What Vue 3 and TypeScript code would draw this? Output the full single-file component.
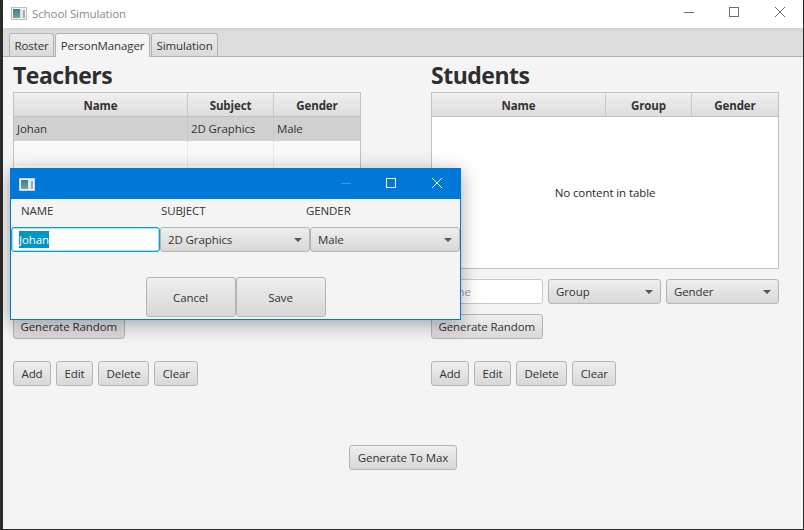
<script setup lang="ts">
interface Panel {
  title: string
  columns: string[]
  placeholder: string
  combo: string
  covered: boolean
  rows: string[][]
}

const tabs: string[] = ['Roster', 'PersonManager', 'Simulation']
const actions: string[] = ['Add', 'Edit', 'Delete', 'Clear']
const panels: Panel[] = [
  {
    title: 'Teachers',
    columns: ['Name', 'Subject', 'Gender'],
    placeholder: 'Name',
    combo: 'Subject',
    covered: true,
    rows: [['Johan', '2D Graphics', 'Male'], ['', '', ''], ['', '', ''], ['', '', ''], ['', '', ''], ['', '', '']]
  },
  {
    title: 'Students',
    columns: ['Name', 'Group', 'Gender'],
    placeholder: 'Name',
    combo: 'Group',
    covered: false,
    rows: []
  }
]
</script>

<template>
  <div class="frame">
    <div class="app">
      <header class="titlebar">
        <svg class="appicon" width="16" height="13" viewBox="0 0 16 13">
          <defs>
            <linearGradient id="iconA" x1="0" y1="0" x2="0" y2="1">
              <stop offset="0" stop-color="#44769a" />
              <stop offset="1" stop-color="#70ab8c" />
            </linearGradient>
          </defs>
          <rect x="0.5" y="0.5" width="15" height="12" fill="#f4f4f4" stroke="#bdbdbd" />
          <rect x="2" y="2" width="7" height="9" fill="url(#iconA)" />
          <rect x="9" y="2" width="3" height="9" fill="#dbe6ea" />
          <rect x="12" y="3" width="2" height="8" fill="#9fadb2" />
        </svg>
        <span class="apptitle">School Simulation</span>
        <div class="winctl">
          <svg width="46" height="28" viewBox="0 0 46 28"><path d="M19 12.5h10" stroke="#6f6f6f" fill="none" /></svg>
          <svg width="46" height="28" viewBox="0 0 46 28"><rect x="18.5" y="7.5" width="9" height="9" stroke="#6f6f6f" fill="none" /></svg>
          <svg width="46" height="28" viewBox="0 0 46 28"><path d="M18 7l10 10M28 7L18 17" stroke="#6f6f6f" fill="none" /></svg>
        </div>
      </header>

      <nav class="tabbar">
        <div v-for="t in tabs" :key="t" class="tab" :class="{ active: t === 'PersonManager' }">{{ t }}</div>
      </nav>

      <main class="content">
        <div class="panels">
          <section v-for="p in panels" :key="p.title" class="panel">
            <h1>{{ p.title }}</h1>
            <div class="table">
              <div class="thead">
                <div v-for="c in p.columns" :key="c" class="th">{{ c }}</div>
              </div>
              <div class="tbody">
                <div v-for="(r, i) in p.rows" :key="i" class="tr" :class="{ selected: i === 0 }">
                  <div v-for="(v, j) in r" :key="j" class="td">{{ v }}</div>
                </div>
                <div v-if="!p.rows.length" class="empty">No content in table</div>
              </div>
            </div>
            <div class="formrow" :class="{ covered: p.covered }">
              <input class="field" :placeholder="p.placeholder" />
              <div class="combo"><span>{{ p.combo }}</span><i class="arrow"></i></div>
              <div class="combo"><span>Gender</span><i class="arrow"></i></div>
            </div>
            <button class="btn random">Generate Random</button>
            <div class="actions">
              <button v-for="a in actions" :key="a" class="btn">{{ a }}</button>
            </div>
          </section>
        </div>
        <div class="footer"><button class="btn">Generate To Max</button></div>
      </main>

      <div class="dialog">
        <div class="dlgtitle">
          <svg class="appicon" width="16" height="13" viewBox="0 0 16 13">
            <defs>
              <linearGradient id="iconB" x1="0" y1="0" x2="0" y2="1">
                <stop offset="0" stop-color="#44769a" />
                <stop offset="1" stop-color="#70ab8c" />
              </linearGradient>
            </defs>
            <rect x="0.5" y="0.5" width="15" height="12" fill="#eef1f2" stroke="#c4d6e4" />
            <rect x="2" y="2" width="7" height="9" fill="url(#iconB)" />
            <rect x="9" y="2" width="3" height="9" fill="#dbe6ea" />
            <rect x="12" y="3" width="2" height="8" fill="#9fadb2" />
          </svg>
          <div class="dlgctl">
            <svg width="46" height="30" viewBox="0 0 46 30"><path d="M19 14.5h10" stroke="#3f97e4" fill="none" /></svg>
            <svg width="46" height="30" viewBox="0 0 46 30"><rect x="18.5" y="9.5" width="9" height="9" stroke="#fff" fill="none" /></svg>
            <svg width="46" height="30" viewBox="0 0 46 30"><path d="M18 9l10 10M28 9L18 19" stroke="#fff" fill="none" /></svg>
          </div>
        </div>
        <div class="dlgbody">
          <div class="labels">
            <span class="lname">NAME</span>
            <span class="lsubject">SUBJECT</span>
            <span>GENDER</span>
          </div>
          <div class="dlgrow">
            <div class="focusfield"><span class="selection">Johan</span></div>
            <div class="combo"><span>2D Graphics</span><i class="arrow"></i></div>
            <div class="combo"><span>Male</span><i class="arrow"></i></div>
          </div>
          <div class="dlgbuttons">
            <button class="btn big">Cancel</button>
            <button class="btn big">Save</button>
          </div>
        </div>
      </div>
    </div>
  </div>
</template>

<style scoped>
.frame {
  width: 804px;
  height: 530px;
  box-sizing: border-box;
  padding: 0 1px 1px 3px;
  background: #2b2b2b;
  font-family: "Open Sans", "Noto Sans", sans-serif;
  font-size: 11.5px;
  letter-spacing: -0.1px;
  color: #333;
  overflow: hidden;
}
.app {
  position: relative;
  height: 100%;
  display: flex;
  flex-direction: column;
  background: #f4f4f4;
}
.titlebar {
  height: 28px;
  flex: none;
  box-sizing: border-box;
  display: flex;
  align-items: center;
  background: #fff;
  padding: 0 0 2px 8px;
}
.appicon { flex: none; }
.apptitle {
  margin-left: 5px;
  color: #8a8a8a;
}
.winctl {
  margin-left: auto;
  display: flex;
  align-self: flex-start;
}
.tabbar {
  height: 29px;
  flex: none;
  box-sizing: border-box;
  display: flex;
  align-items: flex-end;
  gap: 1px;
  padding-left: 6px;
  background: linear-gradient(#d2d2d2, #dcdcdc 5px);
  border-bottom: 1px solid #b0b0b0;
}
.tab {
  height: 23px;
  box-sizing: border-box;
  padding: 4px 4.5px 0;
  border: 1px solid #b4b4b4;
  border-bottom: none;
  border-radius: 3px 3px 0 0;
  background: linear-gradient(#ececec, #d9d9d9);
}
.tab.active {
  height: 24px;
  margin-bottom: -1px;
  background: #f4f4f4;
}
.content {
  flex: 1;
  display: flex;
  flex-direction: column;
}
.panels {
  display: grid;
  grid-template-columns: 348px 348px;
  column-gap: 70px;
  padding-left: 10px;
}
.panel { min-width: 0; }
h1 {
  margin: 0;
  height: 35px;
  line-height: 36px;
  font-size: 23px;
  letter-spacing: -0.5px;
  font-weight: 700;
  color: #2e2e2e;
}
.table {
  height: 177px;
  box-sizing: border-box;
  border: 1px solid #c2c2c2;
  background: #fff;
  display: flex;
  flex-direction: column;
  overflow: hidden;
}
.thead {
  height: 23px;
  flex: none;
  display: grid;
  grid-template-columns: 174px 86px 1fr;
  border-bottom: 1px solid #c2c2c2;
  box-sizing: content-box;
}
.th {
  box-sizing: border-box;
  padding-top: 1px;
  display: flex;
  align-items: center;
  justify-content: center;
  font-weight: 700;
  border-right: 1px solid #c8c8c8;
  background: linear-gradient(#f0f0f0, #dcdcdc);
}
.th:last-child { border-right: none; }
.tbody {
  flex: 1;
  position: relative;
  display: flex;
  flex-direction: column;
}
.tr {
  height: 24px;
  flex: none;
  box-sizing: border-box;
  display: grid;
  grid-template-columns: 174px 86px 1fr;
  background: #fff;
  border-bottom: 1px solid #ececec;
}
.tr:nth-child(even) { background: #f9f9f9; }
.tr.selected {
  background: #d0d0d0;
  border-bottom: none;
}
.td {
  box-sizing: border-box;
  padding-left: 3px;
  line-height: 23px;
  border-right: 1px solid #e8e8e8;
}
.tr.selected .td { border-right-color: #c8c8c8; }
.td:last-child { border-right: none; }
.empty {
  flex: 1;
  display: flex;
  align-items: center;
  justify-content: center;
  color: #1f1f1f;
}
.formrow {
  display: grid;
  grid-template-columns: 112px 113px 113px;
  gap: 5px;
  margin-top: 10px;
  height: 25px;
}
.formrow.covered { visibility: hidden; }
.field {
  box-sizing: border-box;
  height: 25px;
  width: 100%;
  min-width: 0;
  padding: 0 7px;
  border: 1px solid #c8c8c8;
  border-radius: 3px;
  background: #fff;
  font: inherit;
  letter-spacing: inherit;
  color: #333;
  outline: none;
}
.field::placeholder { color: #9a9a9a; opacity: 1; }
.combo {
  box-sizing: border-box;
  height: 25px;
  display: flex;
  align-items: center;
  justify-content: space-between;
  padding: 0 7px 0 7px;
  border: 1px solid #b5b5b5;
  border-radius: 3px;
  background: linear-gradient(#eeeeee, #d8d8d8);
}
.arrow {
  width: 0;
  height: 0;
  border-left: 4px solid transparent;
  border-right: 4px solid transparent;
  border-top: 4px solid #555;
}
.btn {
  box-sizing: border-box;
  height: 25px;
  padding: 0 7.5px;
  border: 1px solid #b5b5b5;
  border-radius: 3px;
  background: linear-gradient(#eeeeee, #d8d8d8);
  font: inherit;
  letter-spacing: inherit;
  color: #333;
  white-space: nowrap;
}
.random {
  display: block;
  margin-top: 10px;
  padding: 0 6.5px;
}
.actions {
  display: flex;
  gap: 5px;
  margin-top: 22px;
}
.footer {
  margin-top: 59px;
  display: flex;
  justify-content: center;
}
.dialog {
  position: absolute;
  left: 7px;
  top: 168px;
  width: 451px;
  height: 152px;
  box-sizing: border-box;
  border: 1px solid #0078d7;
  background: #f4f4f4;
  box-shadow: 0 4px 18px rgba(0, 0, 0, 0.35);
  display: flex;
  flex-direction: column;
}
.dlgtitle {
  height: 30px;
  flex: none;
  background: #0078d7;
  display: flex;
  align-items: center;
  padding-left: 8px;
}
.dlgctl {
  margin-left: auto;
  display: flex;
}
.dlgbody {
  flex: 1;
  display: flex;
  flex-direction: column;
}
.labels {
  display: flex;
  height: 28px;
  box-sizing: border-box;
  padding: 0 0 6px 10px;
  align-items: center;
}
.lname { width: 140px; }
.lsubject { width: 145px; }
.dlgrow {
  display: grid;
  grid-template-columns: 149px 150px 150px;
}
.focusfield {
  box-sizing: border-box;
  height: 25px;
  padding: 0 7px;
  display: flex;
  align-items: center;
  background: #fff;
  border: 1px solid #039ed3;
  border-radius: 3px;
  box-shadow: 0 0 0 1px #a9e0f2 inset;
}
.selection {
  background: #0096c9;
  color: #fff;
  line-height: 17px;
}
.dlgbuttons {
  display: flex;
  justify-content: center;
  margin-top: 25px;
}
.big {
  width: 90px;
  height: 40px;
}
</style>

<style>
html, body { margin: 0; background: #2b2b2b; }
</style>
